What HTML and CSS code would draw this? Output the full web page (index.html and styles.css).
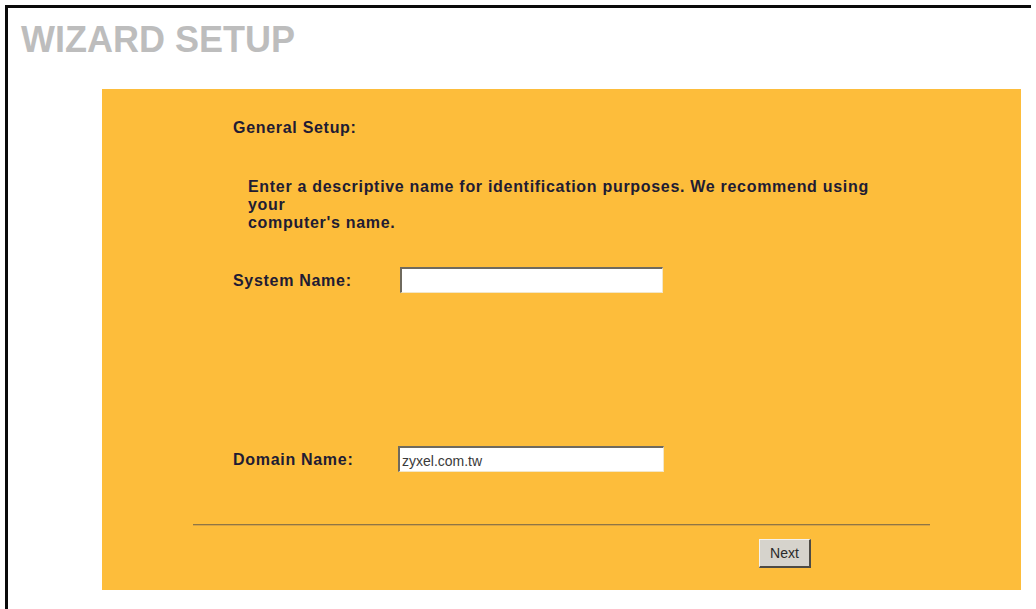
FILE: index.html
```html
<!DOCTYPE html>
<html lang="en">
<head>
<meta charset="utf-8">
<title>Wizard Setup</title>
<link rel="stylesheet" href="styles.css">
</head>
<body>
<div class="frame">
  <h1 class="title">WIZARD SETUP</h1>
  <form class="panel" onsubmit="return false">
    <div class="heading">General Setup:</div>
    <p class="intro">Enter a descriptive name for identification purposes. We recommend using your<br>computer's name.</p>
    <div class="field">
      <label class="label" for="sysname">System Name:</label>
      <input class="text-input" id="sysname" type="text" value="">
    </div>
    <div class="field field-domain">
      <label class="label" for="domain">Domain Name:</label>
      <input class="text-input" id="domain" type="text" value="zyxel.com.tw">
    </div>
    <hr class="rule">
    <div class="actions">
      <button class="btn" type="submit">Next</button>
    </div>
  </form>
</div>
</body>
</html>
```

FILE: styles.css
```css
html, body {
  margin: 0;
  padding: 0;
  background: #ffffff;
  overflow: hidden;
}

body {
  padding: 5px 5px 0 5px;
  font-family: "Liberation Sans", Arial, sans-serif;
}

/* outer window frame: only the top and left edges are visible */
.frame {
  box-sizing: border-box;
  height: calc(100vh - 5px);
  border-top: 3px solid #0a0a0a;
  border-left: 3px solid #0a0a0a;
  padding: 14px 0 0 13px;
}

.title {
  margin: 0;
  font-size: 36px;
  line-height: 36px;
  font-weight: bold;
  color: #bdbdbd;
  letter-spacing: 0;
}

.panel {
  box-sizing: border-box;
  width: 919px;
  margin: 31px 0 0 81px;
  padding: 30px 0 22px 131px;
  background: #fdbd3b;
  color: #211b33;
  font-size: 16px;
  font-weight: bold;
  letter-spacing: 0.7px;
}

.heading {
  line-height: 18px;
}

.intro {
  width: 640px;
  margin: 41px 0 0 15px;
  line-height: 18px;
}

.field {
  display: grid;
  grid-template-columns: 167px 263px;
  align-items: center;
  margin-top: 35px;
}

.field-domain {
  grid-template-columns: 165px 266px;
  margin-top: 153px;
}

.label {
  line-height: 18px;
  padding-top: 2px;
}

.text-input {
  box-sizing: border-box;
  height: 26px;
  margin: 0;
  padding: 2px 3px 0 2px;
  background: #ffffff;
  border-style: solid;
  border-width: 2px 1px 1px 2px;
  border-color: #6f6a5e #f3e7c8 #f3e7c8 #6f6a5e;
  font-family: "Liberation Sans", Arial, sans-serif;
  font-size: 14px;
  font-weight: normal;
  letter-spacing: 0;
  color: #3a3a3a;
  outline: none;
}

.rule {
  box-sizing: border-box;
  height: 2px;
  margin: 52px 0 0 -40px;
  width: 737px;
  border: 0;
  border-top: 1px solid #8f7644;
  border-bottom: 1px solid #d9a443;
}

.actions {
  display: flex;
  margin-top: 13px;
  padding-left: 526px;
}

.btn {
  box-sizing: border-box;
  width: 52px;
  height: 29px;
  margin: 0;
  padding: 0;
  background: #d6d3cc;
  border-style: solid;
  border-width: 1px 2px 2px 1px;
  border-color: #f4f2ee #4d4a44 #4d4a44 #f4f2ee;
  font-family: "Liberation Sans", Arial, sans-serif;
  font-size: 14px;
  font-weight: normal;
  letter-spacing: 0;
  color: #2a2a2a;
}
```
